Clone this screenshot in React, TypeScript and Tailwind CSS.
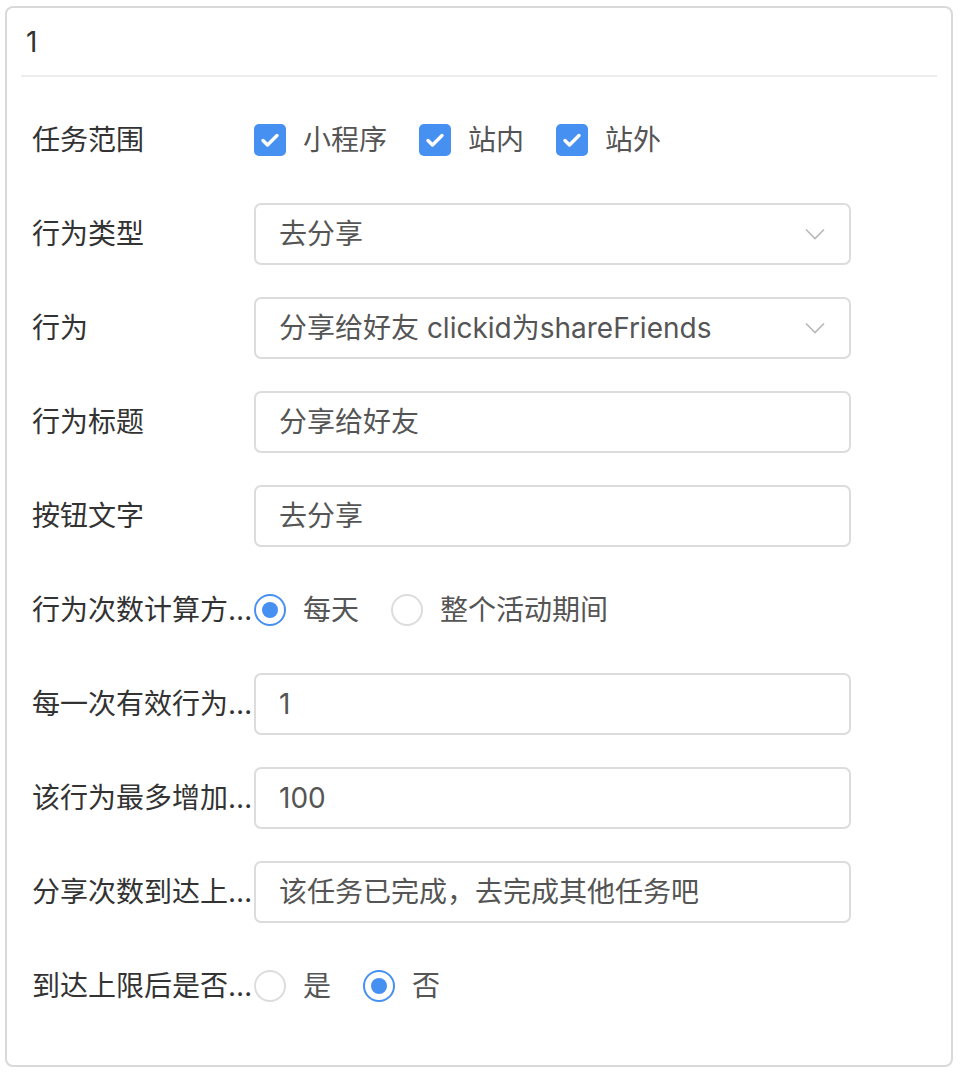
import React from "react";

const font = "font-['Inter','Noto_Sans_CJK_SC',sans-serif]";

const Check = ({ label }: { label: string }) => (
  <label className="flex items-center gap-[17px]">
    <span className="flex h-[32px] w-[32px] items-center justify-center rounded-[5px] bg-[#4690f2]">
      <svg width="20" height="16" viewBox="0 0 20 16" fill="none">
        <path d="M3 8.5l4.5 4.5L17 3.5" stroke="white" strokeWidth="3.4" strokeLinecap="round" strokeLinejoin="round" />
      </svg>
    </span>
    <span className="text-[#555]">{label}</span>
  </label>
);

const Radio = ({ label, checked }: { label: string; checked?: boolean }) => (
  <label className="flex items-center gap-[17px]">
    <span
      className={
        checked
          ? "flex h-[32px] w-[32px] items-center justify-center rounded-full border-2 border-[#4690f2]"
          : "flex h-[32px] w-[32px] items-center justify-center rounded-full border-2 border-[#dcdcdc]"
      }
    >
      {checked && <span className="h-[16px] w-[16px] rounded-full bg-[#4690f2]" />}
    </span>
    <span className="text-[#555]">{label}</span>
  </label>
);

const Field = ({ value, select }: { value: string; select?: boolean }) => (
  <div className="flex h-[62px] w-[597px] items-center justify-between rounded-[7px] border-2 border-[#dcdcdc] pl-[23px] pr-[24px] text-[#555]">
    <span>{value}</span>
    {select && (
      <svg width="20" height="12" viewBox="0 0 20 12" fill="none">
        <path d="M1 1.5l9 9 9-9" stroke="#b8b8b8" strokeWidth="1.6" />
      </svg>
    )}
  </div>
);

const Row = ({ label, children }: { label: string; children: React.ReactNode }) => (
  <div className="flex h-[62px] items-center">
    <div className="w-[233px] shrink-0 truncate pl-[11px] text-[#333]">{label}</div>
    <div className="flex items-center">{children}</div>
  </div>
);

export default function App() {
  return (
    <div className={`min-h-[1078px] bg-white pl-[5px] pt-[6px] text-[28px] ${font}`}>
      <div className="h-[1061px] w-[948px] rounded-[8px] border-2 border-[#d9d9d9] bg-white">
        <div className="mx-[14px] flex h-[69px] items-center border-b-2 border-[#ececec] px-[5px] text-[#333]">
          1
        </div>
        <div className="flex flex-col gap-[32px] px-[14px] pt-[32px]">
          <Row label="任务范围">
            <div className="flex items-center gap-[32px]">
              <Check label="小程序" />
              <Check label="站内" />
              <Check label="站外" />
            </div>
          </Row>
          <Row label="行为类型">
            <Field value="去分享" select />
          </Row>
          <Row label="行为">
            <Field value="分享给好友 clickid为shareFriends" select />
          </Row>
          <Row label="行为标题">
            <Field value="分享给好友" />
          </Row>
          <Row label="按钮文字">
            <Field value="去分享" />
          </Row>
          <Row label="行为次数计算方式">
            <div className="flex items-center gap-[32px]">
              <Radio label="每天" checked />
              <Radio label="整个活动期间" />
            </div>
          </Row>
          <Row label="每一次有效行为增加">
            <Field value="1" />
          </Row>
          <Row label="该行为最多增加次数">
            <Field value="100" />
          </Row>
          <Row label="分享次数到达上限提示">
            <Field value="该任务已完成，去完成其他任务吧" />
          </Row>
          <Row label="到达上限后是否隐藏">
            <div className="flex items-center gap-[32px]">
              <Radio label="是" />
              <Radio label="否" checked />
            </div>
          </Row>
        </div>
      </div>
    </div>
  );
}
